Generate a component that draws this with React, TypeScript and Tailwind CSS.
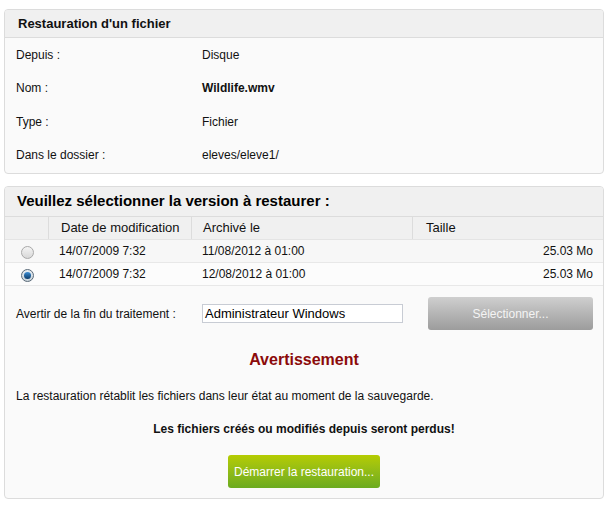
import React from "react";

function Radio({ checked }: { checked?: boolean }) {
  return (
    <span
      className={`inline-flex h-[13px] w-[13px] items-center justify-center rounded-full border ${
        checked ? "border-[#5a6a78] bg-gradient-to-b from-[#e8eef3] to-[#c9d3da]" : "border-[#a8a8a8] bg-gradient-to-b from-[#f4f4f4] to-[#d8d8d8]"
      }`}
    >
      {checked && <span className="h-[7px] w-[7px] rounded-full bg-gradient-to-b from-[#3d8fd6] to-[#0c3c6a]" />}
    </span>
  );
}

export default function App() {
  const info = [
    ["Depuis :", "Disque", false],
    ["Nom :", "Wildlife.wmv", true],
    ["Type :", "Fichier", false],
    ["Dans le dossier :", "eleves/eleve1/", false],
  ] as const;
  const rows = [
    { d: "14/07/2009 7:32", a: "11/08/2012 à 01:00", s: "25.03 Mo", c: false },
    { d: "14/07/2009 7:32", a: "12/08/2012 à 01:00", s: "25.03 Mo", c: true },
  ];
  return (
    <div className="min-h-[508px] w-[609px] bg-white px-[4px] pt-[9px] text-[12px] text-[#111] [font-family:'Liberation_Sans',Arial,sans-serif]">
      <div className="w-[600px] overflow-hidden rounded-[4px] border border-[#dcdcdc] bg-[#fafafa]">
        <div className="flex h-[28px] items-center border-b border-[#dcdcdc] bg-[#f0f0f0] pl-[13px] text-[13px] font-bold">
          Restauration d'un fichier
        </div>
        <div className="pb-[1px]">
          {info.map(([l, v, b]) => (
            <div key={l} className="flex h-[33.5px] items-center">
              <div className="w-[197px] pl-[11px]">{l}</div>
              <div className={b ? "font-bold" : ""}>{v}</div>
            </div>
          ))}
        </div>
      </div>

      <div className="mt-[12px] w-[600px] overflow-hidden rounded-[4px] border border-[#dcdcdc] bg-[#fafafa]">
        <div className="flex h-[30px] items-center border-b border-[#dcdcdc] bg-[#f0f0f0] pl-[12px] text-[15px] font-bold text-black">
          Veuillez sélectionner la version à restaurer :
        </div>
        <div className="flex h-[23px] items-center border-b border-[#e4e4e4] bg-[#f0f0f0] text-[13px]">
          <div className="h-full w-[44px] border-r border-[#dcdcdc]" />
          <div className="flex h-full w-[143px] items-center border-r border-[#dcdcdc] pl-[12px]">Date de modification</div>
          <div className="flex h-full w-[221px] items-center border-r border-[#dcdcdc] pl-[11px]">Archivé le</div>
          <div className="flex h-full flex-1 items-center pl-[13px]">Taille</div>
        </div>
        {rows.map((r, i) => (
          <div key={i} className={`flex h-[23px] items-center border-b border-[#e8e8e8] ${i === 0 ? "bg-[#f7f7f7]" : "bg-[#fcfcfc]"}`}>
            <div className="flex w-[44px] items-center justify-center pt-[2px]">
              <Radio checked={r.c} />
            </div>
            <div className="w-[143px] pl-[10px]">{r.d}</div>
            <div className="w-[221px] pl-[10px]">{r.a}</div>
            <div className="flex-1 pr-[10px] text-right">{r.s}</div>
          </div>
        ))}

        <div className="flex items-center pt-[11px]">
          <div className="w-[197px] pl-[11px]">Avertir de la fin du traitement :</div>
          <div className="flex h-[19px] w-[201px] items-center border border-[#c8ccd4] bg-white pl-[2px] text-[13px] text-black">
            Administrateur Windows
          </div>
          <button className="ml-[25px] flex h-[33px] w-[165px] items-center justify-center rounded-[3px] bg-gradient-to-b from-[#cfcfcf] to-[#9c9c9c] text-[12px] text-[#f4f4f4]">
            Sélectionner...
          </button>
        </div>

        <div className="mt-[18px] text-center text-[16px] font-bold text-[#8b0a0a]">Avertissement</div>
        <div className="mt-[15px] pl-[11px]">La restauration rétablit les fichiers dans leur état au moment de la sauvegarde.</div>
        <div className="mt-[15px] text-center font-bold">Les fichiers créés ou modifiés depuis seront perdus!</div>
        <div className="flex justify-center pt-[17px] pb-[10px]">
          <button className="flex h-[33px] w-[152px] items-center justify-center rounded-[3px] bg-gradient-to-b from-[#b5cc00] to-[#6bab1f] text-[12px] text-white">
            Démarrer la restauration...
          </button>
        </div>
      </div>
    </div>
  );
}
